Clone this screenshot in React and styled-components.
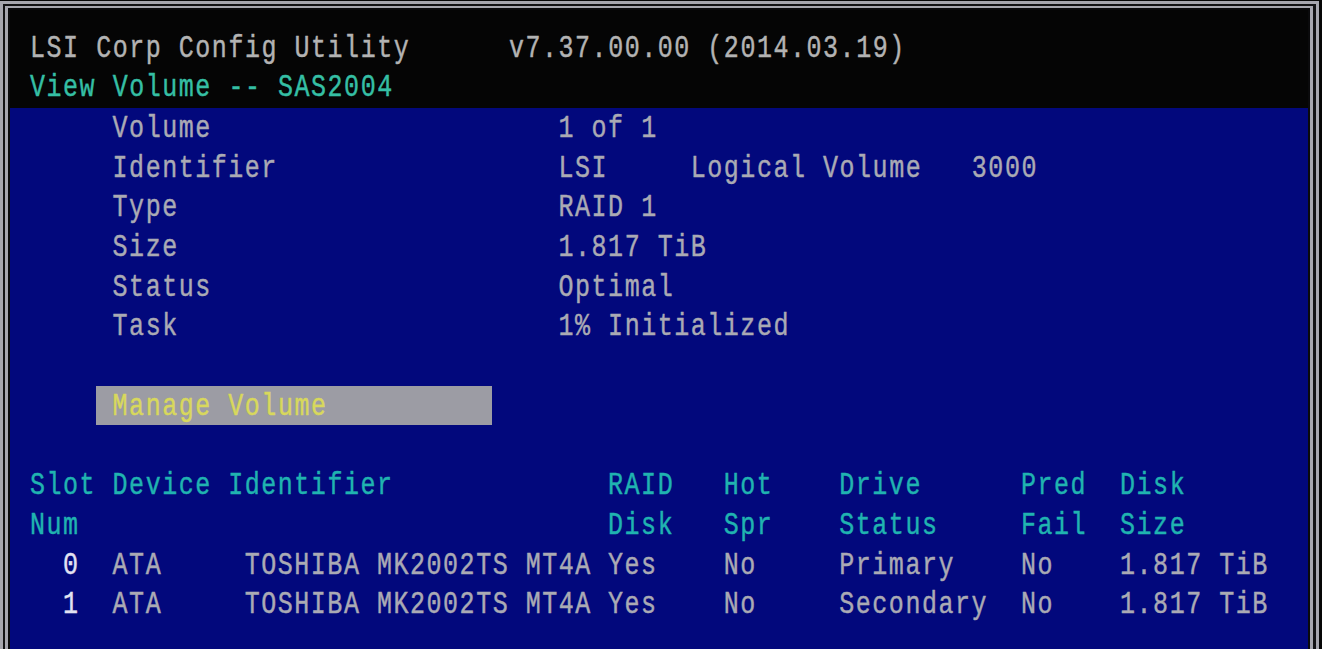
import React from "react";
import styled, { createGlobalStyle } from "styled-components";

const Global = createGlobalStyle`
  html, body {
    margin: 0;
    padding: 0;
    background: #070707;
  }
  body {
    width: 1322px;
    height: 649px;
    overflow: hidden;
  }
`;

const RULE = "#a6a6ae";
const ROW_H = 39.7;
const CELL_W = 16.53;
const FONT_PX = 25;

const tones = {
  gray: "#aaaab4",
  title: "#b3b3b3",
  mint: "#35bfa4",
  cyan: "#20b3b0",
  bright: "#e2e2f2",
  yellow: "#d8d85c",
};

/* Monitor frame: two grey rules round the text screen */
const Screen = styled.div`
  width: 1322px;
  height: 649px;
  box-sizing: border-box;
  padding: 1px 3px 0 0;
  background: #070707;
  overflow: hidden;
`;

const OuterRule = styled.div`
  height: 100%;
  box-sizing: border-box;
  border: 3px solid ${RULE};
  border-bottom: none;
  padding: 2px 3px 0 2px;
  background: #121214;
`;

const InnerRule = styled.div`
  height: 100%;
  box-sizing: border-box;
  border: 2px solid ${RULE};
  border-left-width: 3px;
  border-right-width: 3px;
  border-bottom: none;
  padding: 2px 2px 0 2px;
  background: #0a0a0c;
  display: flex;
  flex-direction: column;
`;

const Header = styled.header`
  background: #050505;
  padding-top: 18.6px;
`;

const Body = styled.main`
  flex: 1;
  background: #02087c;
`;

/* One line of the 80-column text screen */
const Row = styled.div`
  display: grid;
  grid-template-columns: repeat(78, ${CELL_W}px);
  height: ${ROW_H}px;
  line-height: ${ROW_H}px;
  padding-left: 20px;
  font-family: "Liberation Mono", "DejaVu Sans Mono", monospace;
  font-size: ${FONT_PX}px;
  letter-spacing: ${(CELL_W - FONT_PX * 0.6).toFixed(3)}px;
`;

const Cell = styled.div`
  grid-column: ${(p) => p.$col + 1} / span ${(p) => p.$span};
  white-space: pre;
  color: ${(p) => tones[p.$tone || "gray"]};
`;

/* Highlighted menu bar */
const Bar = styled.div`
  grid-column: ${(p) => p.$col + 1} / span ${(p) => p.$span};
  background: #9c9ca4;
  padding-left: ${CELL_W}px;
  white-space: pre;
  color: ${tones.yellow};
`;

/* Tall, narrow glyphs of the BIOS font */
const Glyphs = styled.span`
  display: inline-block;
  transform: translateY(${(p) => (p.$up ? 0 : 1.5)}px) scaleY(1.29);
  transform-origin: 50% 52%;
  -webkit-text-stroke: 0.35px currentColor;
`;

const T = ({ col, tone, up, children }) => (
  <Cell $col={col} $span={Math.max(1, String(children).length)} $tone={tone}>
    <Glyphs $up={up}>{children}</Glyphs>
  </Cell>
);

const properties = [
  ["Volume", "1 of 1"],
  ["Identifier", "LSI     Logical Volume   3000"],
  ["Type", "RAID 1"],
  ["Size", "1.817 TiB"],
  ["Status", "Optimal"],
  ["Task", "1% Initialized"],
];

const columns = [
  { col: 0, top: "Slot", bottom: "Num" },
  { col: 5, top: "Device", bottom: "" },
  { col: 12, top: "Identifier", bottom: "" },
  { col: 35, top: "RAID", bottom: "Disk" },
  { col: 42, top: "Hot", bottom: "Spr" },
  { col: 49, top: "Drive", bottom: "Status" },
  { col: 60, top: "Pred", bottom: "Fail" },
  { col: 66, top: "Disk", bottom: "Size" },
];

const disks = [
  { slot: "0", status: "Primary" },
  { slot: "1", status: "Secondary" },
];

export default function App() {
  return (
    <>
      <Global />
      <Screen>
        <OuterRule>
          <InnerRule>
            <Header>
              <Row>
                <T col={0} tone="title" up>LSI Corp Config Utility</T>
                <T col={29} tone="title" up>v7.37.00.00 (2014.03.19)</T>
              </Row>
              <Row>
                <T col={0} tone="mint" up>View Volume -- SAS2004</T>
              </Row>
            </Header>
            <Body>
              {properties.map(([label, value]) => (
                <Row key={label}>
                  <T col={5}>{label}</T>
                  <T col={32}>{value}</T>
                </Row>
              ))}
              <Row />
              <Row>
                <Bar $col={4} $span={24}>
                  <Glyphs>Manage Volume</Glyphs>
                </Bar>
              </Row>
              <Row />
              <Row>
                {columns.map((c) => (
                  <T key={c.col} col={c.col} tone="cyan">{c.top}</T>
                ))}
              </Row>
              <Row>
                {columns
                  .filter((c) => c.bottom)
                  .map((c) => (
                    <T key={c.col} col={c.col} tone="cyan">{c.bottom}</T>
                  ))}
              </Row>
              {disks.map((d) => (
                <Row key={d.slot}>
                  <T col={2} tone="bright">{d.slot}</T>
                  <T col={5}>ATA</T>
                  <T col={13}>TOSHIBA MK2002TS MT4A</T>
                  <T col={35}>Yes</T>
                  <T col={42}>No</T>
                  <T col={49}>{d.status}</T>
                  <T col={60}>No</T>
                  <T col={66}>1.817 TiB</T>
                </Row>
              ))}
            </Body>
          </InnerRule>
        </OuterRule>
      </Screen>
    </>
  );
}
